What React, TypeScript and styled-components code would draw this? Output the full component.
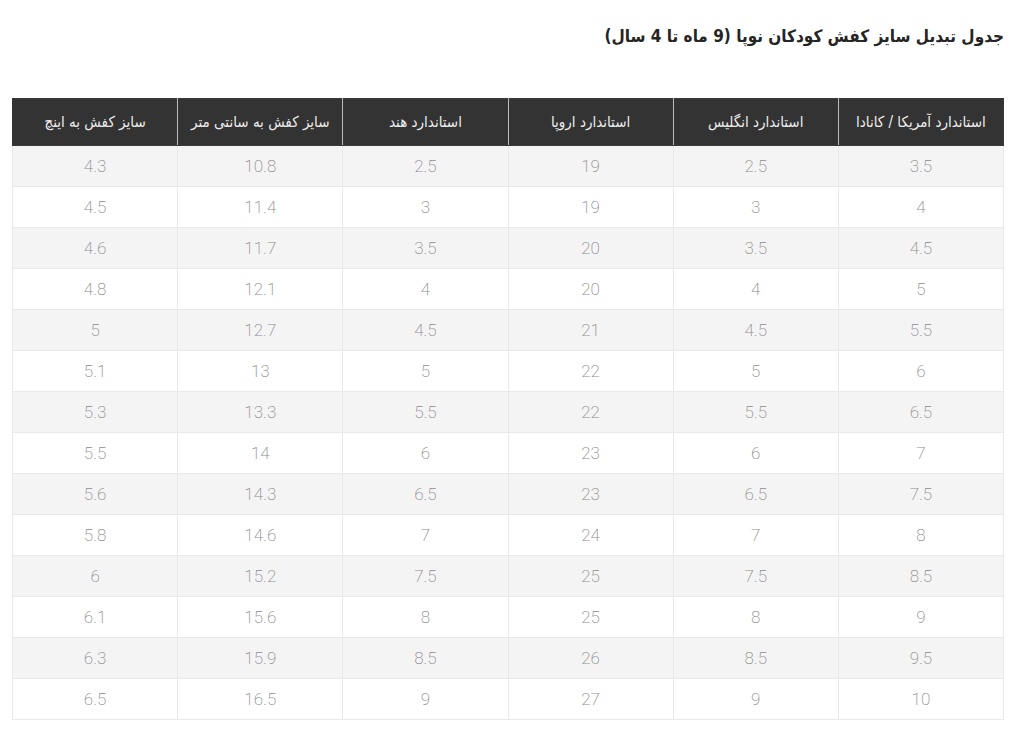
import React from 'react'
import { createGlobalStyle, styled } from 'styled-components'

const GlobalStyle = createGlobalStyle`
  html, body {
    margin: 0;
    padding: 0;
    background: #fff;
  }
  body {
    font-family: Roboto, "DejaVu Sans Condensed", "DejaVu Sans", sans-serif;
  }
`

const Page = styled.div`
  direction: rtl;
  padding: 19px 20px 0 12px;
`

const Title = styled.h2`
  margin: 0 0 44px;
  font-family: "DejaVu Sans Condensed", "DejaVu Sans", sans-serif;
  font-stretch: condensed;
  font-size: 17px;
  font-weight: 700;
  line-height: 35px;
  color: #252525;
  text-align: right;
`

const Table = styled.table`
  width: 100%;
  border-collapse: collapse;
  table-layout: fixed;
`

const HeadCell = styled.th`
  height: 46px;
  padding: 0 4px;
  background: #333;
  color: #eee;
  font-family: "DejaVu Sans Condensed", "DejaVu Sans", sans-serif;
  font-stretch: condensed;
  font-size: 15px;
  font-weight: 400;
  white-space: nowrap;
  text-align: center;
  border: 1px solid #3a3a3a;
  border-left-color: #bbb;
  &:last-child {
    border-left-color: #333;
  }
`

const Row = styled.tr<{ $striped: boolean }>`
  background: ${(p) => (p.$striped ? '#f4f4f4' : '#fff')};
`

const Cell = styled.td`
  height: 40px;
  padding: 0;
  border: 1px solid #e9e9e9;
  color: #8c8c8c;
  font-family: Roboto, sans-serif;
  font-weight: 200;
  font-size: 17px;
  text-align: center;
`

const headers = [
  'استاندارد آمریکا / کانادا',
  'استاندارد انگلیس',
  'استاندارد اروپا',
  'استاندارد هند',
  'سایز کفش به سانتی متر',
  'سایز کفش به اینچ',
]

const rows = [
  ['3.5', '2.5', '19', '2.5', '10.8', '4.3'],
  ['4', '3', '19', '3', '11.4', '4.5'],
  ['4.5', '3.5', '20', '3.5', '11.7', '4.6'],
  ['5', '4', '20', '4', '12.1', '4.8'],
  ['5.5', '4.5', '21', '4.5', '12.7', '5'],
  ['6', '5', '22', '5', '13', '5.1'],
  ['6.5', '5.5', '22', '5.5', '13.3', '5.3'],
  ['7', '6', '23', '6', '14', '5.5'],
  ['7.5', '6.5', '23', '6.5', '14.3', '5.6'],
  ['8', '7', '24', '7', '14.6', '5.8'],
  ['8.5', '7.5', '25', '7.5', '15.2', '6'],
  ['9', '8', '25', '8', '15.6', '6.1'],
  ['9.5', '8.5', '26', '8.5', '15.9', '6.3'],
  ['10', '9', '27', '9', '16.5', '6.5'],
]

export default function App() {
  return (
    <>
      <GlobalStyle />
      <Page>
        <Title>جدول تبدیل سایز کفش کودکان نوپا (9 ماه تا 4 سال)</Title>
        <Table>
          <thead>
            <tr>
              {headers.map((h) => (
                <HeadCell key={h}>{h}</HeadCell>
              ))}
            </tr>
          </thead>
          <tbody>
            {rows.map((r, i) => (
              <Row key={i} $striped={i % 2 === 0}>
                {r.map((v, j) => (
                  <Cell key={j}>{v}</Cell>
                ))}
              </Row>
            ))}
          </tbody>
        </Table>
      </Page>
    </>
  )
}
